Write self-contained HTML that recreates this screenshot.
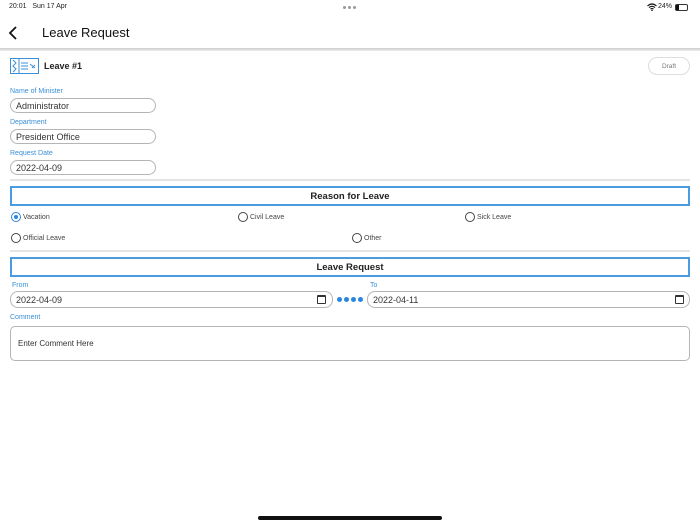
<!DOCTYPE html><html><head><style>
*{margin:0;padding:0;box-sizing:border-box}
body{width:700px;height:525px;background:#fff;font-family:"Liberation Sans",sans-serif;position:relative;overflow:hidden;color:#222}
.a{position:absolute}
.lbl{position:absolute;font-size:7px;color:#3a8fd6}
.inp{position:absolute;border:1px solid #b5b5b5;border-radius:8px;font-size:9px;padding-left:5px;display:flex;align-items:center;color:#333}
.box{position:absolute;left:10px;width:680px;height:20px;border:2px solid #4a9be0;font-size:9.5px;font-weight:bold;display:flex;align-items:center;justify-content:center}
.rad{position:absolute;font-size:7px;color:#444;display:flex;align-items:center}
.rad i{display:inline-block;width:10px;height:10px;border:1px solid #444;border-radius:50%;margin-right:2px;position:relative}
.rad i.on{border-color:#2a86e0}
.rad i.on:after{content:"";position:absolute;left:2px;top:2px;width:4px;height:4px;border-radius:50%;background:#2a86e0}
.hr{position:absolute;left:10px;width:680px;height:2px;background:#e4e4e4}
.cal{position:absolute;width:9px;height:9px;border:1.3px solid #333;border-top-width:2.5px;border-radius:1px}
</style></head><body>
<div class="a" style="left:9px;top:3px;font-size:7px">20:01&nbsp;&nbsp; Sun 17 Apr</div>
<div class="a" style="left:343px;top:6px;display:flex;gap:2px"><span style="width:3px;height:3px;border-radius:50%;background:#999"></span><span style="width:3px;height:3px;border-radius:50%;background:#999"></span><span style="width:3px;height:3px;border-radius:50%;background:#999"></span></div>
<svg class="a" style="left:647px;top:3px" width="10" height="8"><path d="M0.5 3 Q5 -1 9.5 3 M2 4.6 Q5 2 8 4.6 M3.5 6 Q5 5 6.5 6" stroke="#111" stroke-width="1.1" fill="none"/><circle cx="5" cy="7.3" r="0.8" fill="#111"/></svg>
<div class="a" style="left:658px;top:3px;font-size:7px">24%</div>
<div class="a" style="left:675px;top:4px;width:13px;height:7px;border:1px solid #333;border-radius:2px"><div style="width:3px;height:5px;background:#111"></div></div>
<svg class="a" style="left:8px;top:26px" width="12" height="14"><path d="M8 1 L2 7 L8 13" stroke="#111" stroke-width="1.8" fill="none"/></svg>
<div class="a" style="left:42px;top:25px;font-size:13px;color:#111">Leave Request</div>
<div class="a" style="left:0;top:48px;width:700px;height:3px;background:linear-gradient(#ccc,#eee)"></div>
<svg class="a" style="left:10px;top:58px" width="29" height="16"><rect x="0.5" y="0.5" width="28" height="15" fill="none" stroke="#3a8fd6"/><path d="M3 2 L6 5 L3 8 L6 11 L3 14" stroke="#3a8fd6" fill="none"/><line x1="9" y1="1" x2="9" y2="15" stroke="#3a8fd6"/><path d="M11 5h7M11 8h7M11 11h7M20 6l5 4M22 10l3-3" stroke="#3a8fd6" fill="none"/></svg>
<div class="a" style="left:44px;top:61px;font-size:9px;font-weight:bold">Leave #1</div>
<div class="a" style="left:648px;top:57px;width:42px;height:18px;border:1px solid #ddd;border-radius:9px;font-size:6.5px;color:#777;display:flex;align-items:center;justify-content:center">Draft</div>
<div class="lbl" style="left:10px;top:88px">Name of Minister</div>
<div class="inp" style="left:10px;top:98px;width:146px;height:15px">Administrator</div>
<div class="lbl" style="left:10px;top:119px">Department</div>
<div class="inp" style="left:10px;top:129px;width:146px;height:15px">President Office</div>
<div class="lbl" style="left:10px;top:150px">Request Date</div>
<div class="inp" style="left:10px;top:160px;width:146px;height:15px">2022-04-09</div>
<div class="hr" style="top:179px"></div>
<div class="box" style="top:186px">Reason for Leave</div>
<div class="rad" style="left:11px;top:212px"><i class="on"></i>Vacation</div>
<div class="rad" style="left:238px;top:212px"><i></i>Civil Leave</div>
<div class="rad" style="left:465px;top:212px"><i></i>Sick Leave</div>
<div class="rad" style="left:11px;top:233px"><i></i>Official Leave</div>
<div class="rad" style="left:352px;top:233px"><i></i>Other</div>
<div class="hr" style="top:250px"></div>
<div class="box" style="top:257px">Leave Request</div>
<div class="lbl" style="left:12px;top:282px">From</div>
<div class="inp" style="left:10px;top:291px;width:323px;height:17px">2022-04-09</div>
<div class="cal" style="left:317px;top:295px"></div>
<div class="a" style="left:337px;top:297px;display:flex;gap:2px"><span style="width:5px;height:5px;border-radius:50%;background:#2a86e0"></span><span style="width:5px;height:5px;border-radius:50%;background:#2a86e0"></span><span style="width:5px;height:5px;border-radius:50%;background:#2a86e0"></span><span style="width:5px;height:5px;border-radius:50%;background:#2a86e0"></span></div>
<div class="lbl" style="left:370px;top:282px">To</div>
<div class="inp" style="left:367px;top:291px;width:323px;height:17px">2022-04-11</div>
<div class="cal" style="left:675px;top:295px"></div>
<div class="lbl" style="left:10px;top:314px">Comment</div>
<div class="inp" style="left:10px;top:326px;width:680px;height:35px;border-radius:5px;padding-left:7px;font-size:8px">Enter Comment Here</div>
<div class="a" style="left:258px;top:516px;width:184px;height:4px;border-radius:2px;background:#111"></div>
</body></html>
